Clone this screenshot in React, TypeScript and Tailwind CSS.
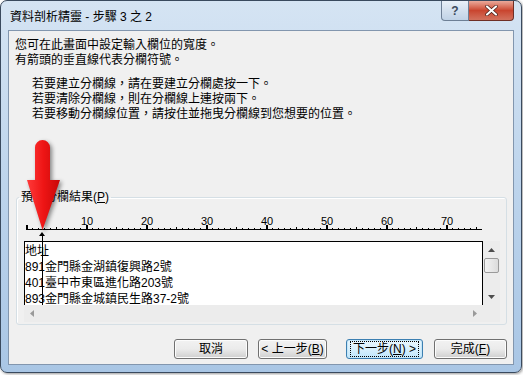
import React from 'react';

const font = "font-['Liberation_Sans','Noto_Sans_CJK_TC',sans-serif]";

const Tri: React.FC<{ dir: 'up' | 'down' | 'left' | 'right'; color?: string }> = ({ dir, color = '#4d4d4d' }) => {
  const pts = {
    up: '0,4 7,4 3.5,0',
    down: '0,0 7,0 3.5,4',
    left: '4,0 4,7 0,3.5',
    right: '0,0 0,7 4,3.5',
  }[dir];
  const vert = dir === 'up' || dir === 'down';
  return (
    <svg width={vert ? 7 : 4} height={vert ? 4 : 7} viewBox={vert ? '0 0 7 4' : '0 0 4 7'}>
      <polygon points={pts} fill={color} />
    </svg>
  );
};

const Ruler: React.FC = () => {
  const ticks = [];
  for (let i = 0; i <= 75; i++) {
    const x = 2 + i * 6;
    if (i % 10 === 0) ticks.push(<rect key={i} x={x} y={13} width={2} height={5} fill="#000" />);
    else if (i % 5 === 0) ticks.push(<rect key={i} x={x} y={15} width={1} height={2} fill="#000" />);
    else ticks.push(<rect key={i} x={x} y={16} width={1} height={1} fill="#000" />);
  }
  const labels = [10, 20, 30, 40, 50, 60, 70];
  return (
    <svg width={480} height={29} className="block ml-[7px] mt-[7px]">
      <rect x={2} y={17} width={456} height={1} fill="#000" />
      {ticks}
      {labels.map((n) => (
        <text
          key={n}
          x={2 + n * 6 + 1}
          y={12.5}
          fontSize={11}
          textAnchor="middle"
          fontFamily="Liberation Sans, sans-serif"
          fill="#000"
        >
          {n}
        </text>
      ))}
      {/* column break marker */}
      <polygon points="15,24 21,24 18,20" fill="#000" />
      <rect x={18} y={23} width={1} height={6} fill="#000" />
    </svg>
  );
};

const rows = ['地址', '891金門縣金湖鎮復興路2號', '401臺中市東區進化路203號', '893金門縣金城鎮民生路37-2號'];

const Btn: React.FC<{ w: string; def?: boolean; children: React.ReactNode; cls?: string }> = ({ w, def, children, cls }) => (
  <div
    className={`${w} ${cls ?? ''} h-[20px] rounded-[3px] border flex items-center justify-center text-[12px] text-black ${
      def
        ? 'border-[#3c7fb1] bg-gradient-to-b from-[#eaf6fd] via-[#d9f0fc] to-[#bee6fd] shadow-[inset_0_0_0_1px_#c5e6f8]'
        : 'border-[#707070] bg-gradient-to-b from-[#f2f2f2] via-[#ebebeb] to-[#cfcfcf] shadow-[inset_0_0_0_1px_#fcfcfc]'
    }`}
  >
    {def ? (
      <span className="border border-dotted border-black px-[2px] leading-[14px]">{children}</span>
    ) : (
      <span className="leading-[14px]">{children}</span>
    )}
  </div>
);

export default function App() {
  return (
    <div className={`w-[523px] h-[375px] bg-white relative overflow-hidden ${font}`}>
      <div className="w-[522px] h-[373px] rounded-[7px] border border-[#3a4a5e] bg-gradient-to-b from-[#d5e4f3] via-[#bdd4ec] to-[#a9c6e5] flex flex-col shadow-[1px_1px_3px_rgba(0,0,0,0.4)]">
        {/* title bar */}
        <div className="h-[29px] flex items-start">
          <div className="pl-[9px] pt-[9px] text-[12px] leading-[15px] text-black flex-1">資料剖析精靈 - 步驟 3 之 2</div>
          <div className="flex mr-[7px]">
            <div className="w-[28px] h-[20px] border border-[#6d7f95] border-t-0 rounded-bl-[4px] bg-gradient-to-b from-[#e9f0f8] via-[#d3e0ee] to-[#c0d2e6] flex items-center justify-center text-[12px] font-bold text-[#3c4a5c]">
              ?
            </div>
            <div className="w-[45px] h-[20px] border border-[#6e2f26] border-t-0 border-l-0 rounded-br-[4px] bg-gradient-to-b from-[#e9a99b] via-[#c9452f] to-[#d2715d] flex items-center justify-center">
              <svg width={13} height={11} viewBox="0 0 13 11">
                <path d="M2 1.5 L11 9.5 M11 1.5 L2 9.5" stroke="#3a1510" strokeWidth={3.4} strokeLinecap="round" />
                <path d="M2 1.5 L11 9.5 M11 1.5 L2 9.5" stroke="#ffffff" strokeWidth={2.2} strokeLinecap="round" />
              </svg>
            </div>
          </div>
        </div>

        {/* client area */}
        <div className="mx-[7px] mb-[7px] flex-1 border border-[#8296ae] bg-[#f0f0f0] flex flex-col text-[12px] leading-[15px] text-black">
          <div className="pl-[6px] pt-[7px]">
            <div>您可在此畫面中設定輸入欄位的寬度。</div>
            <div>有箭頭的垂直線代表分欄符號。</div>
          </div>
          <div className="pl-[23px] mt-[9px]">
            <div>若要建立分欄線，請在要建立分欄處按一下。</div>
            <div>若要清除分欄線，則在分欄線上連按兩下。</div>
            <div>若要移動分欄線位置，請按住並拖曳分欄線到您想要的位置。</div>
          </div>

          <fieldset className="mt-[68px] ml-[7px] mr-[6px] border border-[#d5dfe5] rounded-[3px] pb-[2px] shadow-[inset_1px_1px_0_#ffffff]">
            <legend className="ml-[2px] px-[2px] leading-[15px]">
              預覽分欄結果(<span className="underline">P</span>)
            </legend>
            <Ruler />
            <div className="ml-[7px] grid grid-cols-[459px_17px] grid-rows-[64px_17px]">
              <div className="relative bg-white border-t border-l border-r border-black overflow-hidden pt-[1px] text-[12px] leading-[16px]">
                {rows.map((r) => (
                  <div key={r} className="whitespace-nowrap">
                    {r}
                  </div>
                ))}
                <div className="absolute left-[17px] top-0 bottom-0 w-px bg-black" />
              </div>
              <div className="bg-[#ececec] flex flex-col items-center">
                <div className="h-[17px] flex items-center justify-center">
                  <Tri dir="up" />
                </div>
                <div className="w-[15px] h-[15px] rounded-[2px] border border-[#9a9a9a] bg-gradient-to-r from-[#f4f4f4] to-[#dcdcdc]" />
                <div className="flex-1" />
                <div className="h-[17px] flex items-center justify-center">
                  <Tri dir="down" />
                </div>
              </div>
              <div className="bg-[#ececec] flex items-center justify-between px-[6px]">
                <Tri dir="left" color="#9a9a9a" />
                <Tri dir="right" color="#9a9a9a" />
              </div>
              <div className="bg-[#ececec]" />
            </div>
          </fieldset>

          <div className="mt-[14px] flex pr-[6px] justify-end">
            <Btn w="w-[74px]">取消</Btn>
            <Btn w="w-[69px]" cls="ml-[10px]">
              &lt; 上一步(<span className="underline">B</span>)
            </Btn>
            <Btn w="w-[77px]" cls="ml-[19px]" def>
              下一步(<span className="underline">N</span>) &gt;
            </Btn>
            <Btn w="w-[73px]" cls="ml-[11px]">
              完成(<span className="underline">F</span>)
            </Btn>
          </div>
        </div>
      </div>

      {/* red annotation arrow */}
      <svg
        width={40}
        height={100}
        viewBox="0 0 40 100"
        className="absolute left-[24px] top-[136px] drop-shadow-[2px_2px_2px_rgba(0,0,0,0.45)]"
      >
        <defs>
          <linearGradient id="ra" x1="0" x2="1" y1="0" y2="0">
            <stop offset="0" stopColor="#ff3a3a" />
            <stop offset="0.5" stopColor="#ee1515" />
            <stop offset="1" stopColor="#c80808" />
          </linearGradient>
        </defs>
        <path
          d="M11 11.5 A7.5 7.5 0 0 1 26 11.5 L26 44 L36 44 L18.5 94 L3 44 L11 44 Z"
          fill="url(#ra)"
        />
      </svg>
    </div>
  );
}
